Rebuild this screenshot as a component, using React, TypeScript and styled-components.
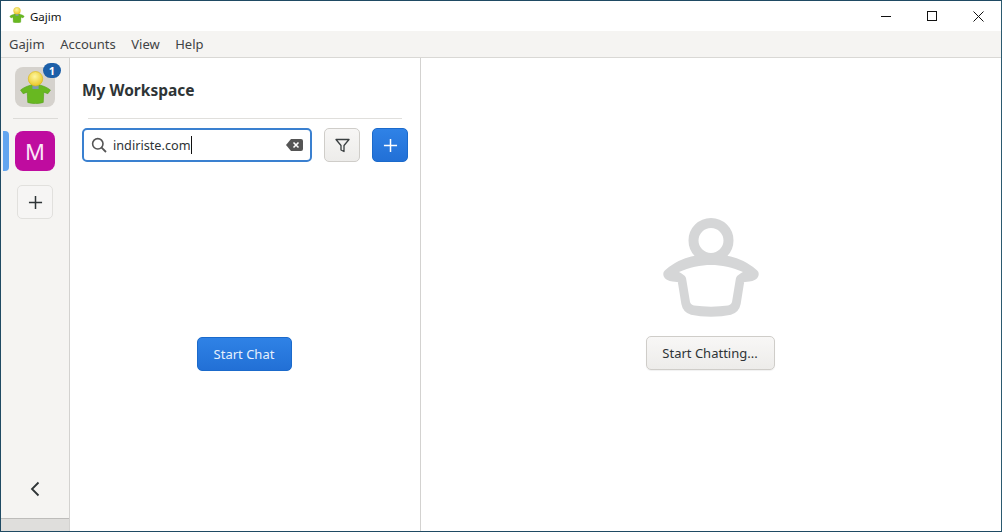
import React from 'react';
import styled, { createGlobalStyle } from 'styled-components';

const GlobalStyle = createGlobalStyle`
  html, body {
    margin: 0;
    padding: 0;
    background: #fff;
  }
  * {
    box-sizing: border-box;
  }
`;

const Window = styled.div`
  width: 1002px;
  height: 532px;
  display: flex;
  flex-direction: column;
  border: 1px solid #1f4a63;
  border-right-color: #2b5a70;
  background: #fff;
  font-family: "Noto Sans", "Open Sans", sans-serif;
  color: #2e3436;
  overflow: hidden;
`;

const TitleBar = styled.div`
  height: 30px;
  display: flex;
  align-items: center;
  padding-left: 8px;
  background: #fff;
  flex-shrink: 0;
`;

const TitleLogo = styled.span`
  margin-bottom: 2px;
`;

const TitleText = styled.span`
  margin-left: 5px;
  font-size: 11.500px;
  color: #111;
`;

const WindowControls = styled.div`
  margin-left: auto;
  display: flex;
  height: 100%;
`;

const WindowControl = styled.div`
  width: 46px;
  height: 30px;
  display: flex;
  align-items: center;
  justify-content: center;
  svg {
    display: block;
  }
`;

const MenuBar = styled.div`
  height: 27px;
  display: flex;
  align-items: center;
  gap: 15.500px;
  padding-left: 8px;
  background: #f5f4f2;
  border-bottom: 1px solid #d9d8d5;
  flex-shrink: 0;
`;

const MenuItem = styled.span`
  font-size: 13px;
  color: #3f4345;
`;

const Body = styled.div`
  flex: 1;
  display: flex;
  min-height: 0;
`;

const Rail = styled.aside`
  position: relative;
  width: 69px;
  flex-shrink: 0;
  display: flex;
  flex-direction: column;
  align-items: center;
  padding-top: 9px;
  background: #f5f4f2;
  border-right: 1px solid #d3d2d0;
`;

const AccountTile = styled.div`
  position: relative;
  width: 40px;
  height: 40px;
  padding-top: 4px;
  border-radius: 8px;
  background: #d5d2cd;
  display: flex;
  align-items: flex-start;
  justify-content: center;
`;

const Badge = styled.span`
  position: absolute;
  top: -4px;
  right: -6px;
  width: 18px;
  height: 15px;
  border-radius: 8px;
  background: #1c5fa8;
  color: #fff;
  font-size: 11px;
  font-weight: 700;
  line-height: 15px;
  text-align: center;
`;

const RailDivider = styled.div`
  width: 45px;
  height: 1px;
  margin-top: 11px;
  background: #dcdbd8;
`;

const WorkspaceTile = styled.div`
  margin-top: 12px;
  width: 40px;
  height: 40px;
  border-radius: 8px;
  background: #bf0c9f;
  color: #fbe6f7;
  font-size: 22px;
  display: flex;
  align-items: center;
  justify-content: center;
`;

const ActiveMark = styled.span`
  position: absolute;
  left: 2px;
  top: 73px;
  width: 6px;
  height: 40px;
  border-radius: 0 4px 4px 0;
  background: #62a5f0;
`;

const RailAdd = styled.div`
  margin-top: 14px;
  width: 36px;
  height: 34px;
  border: 1px solid #e1e0dd;
  border-radius: 5px;
  background: #f6f5f4;
  display: flex;
  align-items: center;
  justify-content: center;
`;

const Collapse = styled.div`
  margin-top: auto;
  height: 58px;
  display: flex;
  align-items: center;
  justify-content: center;
`;

const RailFooter = styled.div`
  align-self: stretch;
  height: 13px;
  background: #dfdedc;
  border-top: 1px solid #bdbcba;
`;

const Sidebar = styled.section`
  width: 351px;
  flex-shrink: 0;
  display: flex;
  flex-direction: column;
  border-right: 1px solid #d3d2d0;
`;

const WorkspaceTitle = styled.h1`
  margin: 0;
  padding: 21px 12px 0;
  height: 60px;
  font-size: 15.500px;
  line-height: 22px;
  font-weight: 700;
  color: #2e3436;
`;

const SidebarDivider = styled.div`
  height: 1px;
  margin: 0 18px;
  background: #e0dfdc;
`;

const Toolbar = styled.div`
  display: flex;
  align-items: center;
  margin: 9px 12px 0;
`;

const SearchBox = styled.div`
  width: 230px;
  height: 34px;
  display: flex;
  align-items: center;
  padding: 0 7px;
  border: 2px solid #3a80d0;
  border-radius: 5px;
  background: #fff;
`;

const SearchText = styled.span`
  margin-left: 6px;
  font-size: 12.700px;
  color: #2e3436;
`;

const Caret = styled.span`
  display: inline-block;
  width: 1px;
  height: 18px;
  background: #111;
  vertical-align: -4px;
`;

const ClearIcon = styled.svg`
  margin-left: auto;
`;

const IconButton = styled.div<{ $primary?: boolean }>`
  width: 36px;
  height: 34px;
  margin-left: 12px;
  display: flex;
  align-items: center;
  justify-content: center;
  border-radius: 5px;
  border: 1px solid ${({ $primary }) => ($primary ? '#1b6acb' : '#cfcdc9')};
  background: ${({ $primary }) =>
    $primary ? 'linear-gradient(#2f82e6, #2270d6)' : 'linear-gradient(#f7f6f5, #edecea)'};
`;

const ChatListEmpty = styled.div`
  flex: 1;
  display: flex;
  align-items: center;
  justify-content: center;
  padding: 15px 2px 0 0;
`;

const PrimaryButton = styled.div`
  width: 95px;
  height: 34px;
  display: flex;
  align-items: center;
  justify-content: center;
  border-radius: 5px;
  border: 1px solid #1b6acb;
  background: linear-gradient(#2f82e6, #2270d6);
  color: #e6f0fc;
  font-size: 13px;
`;

const Conversation = styled.main`
  flex: 1;
  display: flex;
  flex-direction: column;
  align-items: center;
  justify-content: center;
  gap: 18px;
  padding: 0 2px 2px 0;
`;

const SecondaryButton = styled.div`
  width: 129px;
  height: 34px;
  display: flex;
  align-items: center;
  justify-content: center;
  border-radius: 5px;
  border: 1px solid #cfcdc9;
  background: linear-gradient(#f8f7f6, #edecea);
  box-shadow: 0 1px 1px rgba(0, 0, 0, 0.06);
  color: #2e3436;
  font-size: 13px;
`;

const PlainSvg = styled.svg`
  display: block;
  flex-shrink: 0;
`;

// gajim mascot, the green shirt with the yellow head
const GajimLogo = ({ size }: { size: number }) => (
  <PlainSvg width={size} height={size} viewBox="0 0 32 32">
    <defs>
      <radialGradient id={`head${size}`} cx="0.45" cy="0.35" r="0.7">
        <stop offset="0" stopColor="#fdf6a0" />
        <stop offset="1" stopColor="#e8c51c" />
      </radialGradient>
    </defs>
    <path
      d="M1.500 18.500C5 15.500 9 14.500 12 13.500L20 13.500C23 14.500 27 15.500 30.500 18.500L28 22L24 20.500L23.500 30.500C19 32 13 32 8.500 30.500L8 20.500L4 22Z"
      fill="#68b821"
      stroke="#55a018"
      strokeWidth="0.6"
      strokeLinejoin="round"
    />
    <path d="M13 12h6v5.500h-6z" fill="#7d9ab0" />
    <circle cx="16" cy="7.500" r="7" fill={`url(#head${size})`} stroke="#d9b614" strokeWidth="0.6" />
  </PlainSvg>
);

const PlusIcon = ({ color, size }: { color: string; size: number }) => (
  <PlainSvg width={size} height={size} viewBox="0 0 16 16">
    <path d="M8 1v14M1 8h14" stroke={color} strokeWidth="1.6" fill="none" />
  </PlainSvg>
);

const PersonPlaceholder = () => (
  <PlainSvg width={100} height={100} viewBox="-1 0 100 100">
    <circle cx="50" cy="22.500" r="17.500" fill="none" stroke="#d5d6d7" strokeWidth="10" />
    <path
      d="M7 56C18 46 34 41 50 41S82 46 93 56C93 59 85 59 79 60L75 85C74 90 72 91 69 92C58 94.500 42 94.500 31 92C28 91 26 90 25 85L21 60C15 59 7 59 7 56Z"
      fill="#d5d6d7"
      stroke="#d5d6d7"
      strokeWidth="9.500"
      strokeLinejoin="round"
    />
    {/* hollow of the body, the sleeves stay solid */}
    <path
      d="M18 54C28 49.500 40 47 50 47S72 49.500 82 54C79 56 76 57 75 60L71 84C70.500 86 69 87 67 87.500C56 89 44 89 33 87.500C31 87 29.500 86 29 84L25 60C24 57 21 56 18 54Z"
      fill="#fff"
    />
  </PlainSvg>
);

const App = () => (
  <>
    <GlobalStyle />
    <Window>
      <TitleBar>
        <TitleLogo>
          <GajimLogo size={16} />
        </TitleLogo>
        <TitleText>Gajim</TitleText>
        <WindowControls>
          <WindowControl>
            <PlainSvg width={10} height={10} viewBox="0 0 10 10">
              <path d="M0 5.500h10" stroke="#111" strokeWidth="1" />
            </PlainSvg>
          </WindowControl>
          <WindowControl>
            <PlainSvg width={10} height={10} viewBox="0 0 10 10">
              <rect x="0.500" y="0.500" width="9" height="9" fill="none" stroke="#111" strokeWidth="1" />
            </PlainSvg>
          </WindowControl>
          <WindowControl>
            <PlainSvg width={11} height={11} viewBox="0 0 11 11">
              <path d="M0.500 0.500l10 10M10.500 0.500l-10 10" stroke="#111" strokeWidth="1" />
            </PlainSvg>
          </WindowControl>
        </WindowControls>
      </TitleBar>
      <MenuBar>
        <MenuItem>Gajim</MenuItem>
        <MenuItem>Accounts</MenuItem>
        <MenuItem>View</MenuItem>
        <MenuItem>Help</MenuItem>
      </MenuBar>
      <Body>
        <Rail>
          <AccountTile>
            <GajimLogo size={33} />
            <Badge>1</Badge>
          </AccountTile>
          <RailDivider />
          <ActiveMark />
          <WorkspaceTile>M</WorkspaceTile>
          <RailAdd>
            <PlusIcon color="#2e3436" size={15} />
          </RailAdd>
          <Collapse>
            <PlainSvg width={10} height={16} viewBox="0 0 10 16">
              <path d="M8.500 1.500L2 8l6.500 6.500" fill="none" stroke="#2e3436" strokeWidth="1.800" />
            </PlainSvg>
          </Collapse>
          <RailFooter />
        </Rail>
        <Sidebar>
          <WorkspaceTitle>My Workspace</WorkspaceTitle>
          <SidebarDivider />
          <Toolbar>
            <SearchBox>
              <PlainSvg width={16} height={16} viewBox="0 0 16 16">
                <circle cx="6.800" cy="6.800" r="5.200" fill="none" stroke="#555" strokeWidth="1.600" />
                <path d="M10.600 10.600L15 15" stroke="#555" strokeWidth="1.800" />
              </PlainSvg>
              <SearchText>
                indiriste.com
                <Caret />
              </SearchText>
              <ClearIcon width={17} height={12} viewBox="0 0 17 12">
                <path d="M5 0h10a2 2 0 0 1 2 2v8a2 2 0 0 1-2 2H5L0 6z" fill="#555" />
                <path d="M7.500 3.500l5 5M12.500 3.500l-5 5" stroke="#fff" strokeWidth="1.600" />
              </ClearIcon>
            </SearchBox>
            <IconButton>
              <PlainSvg width={15} height={15} viewBox="0 0 15 15">
                <path d="M1 1.500h13L9 7.500v6l-3-1.500V7.500z" fill="none" stroke="#3a3f41" strokeWidth="1.300" strokeLinejoin="round" />
              </PlainSvg>
            </IconButton>
            <IconButton $primary>
              <PlusIcon color="#fff" size={15} />
            </IconButton>
          </Toolbar>
          <ChatListEmpty>
            <PrimaryButton>Start Chat</PrimaryButton>
          </ChatListEmpty>
        </Sidebar>
        <Conversation>
          <PersonPlaceholder />
          <SecondaryButton>Start Chatting...</SecondaryButton>
        </Conversation>
      </Body>
    </Window>
  </>
);

export default App;
